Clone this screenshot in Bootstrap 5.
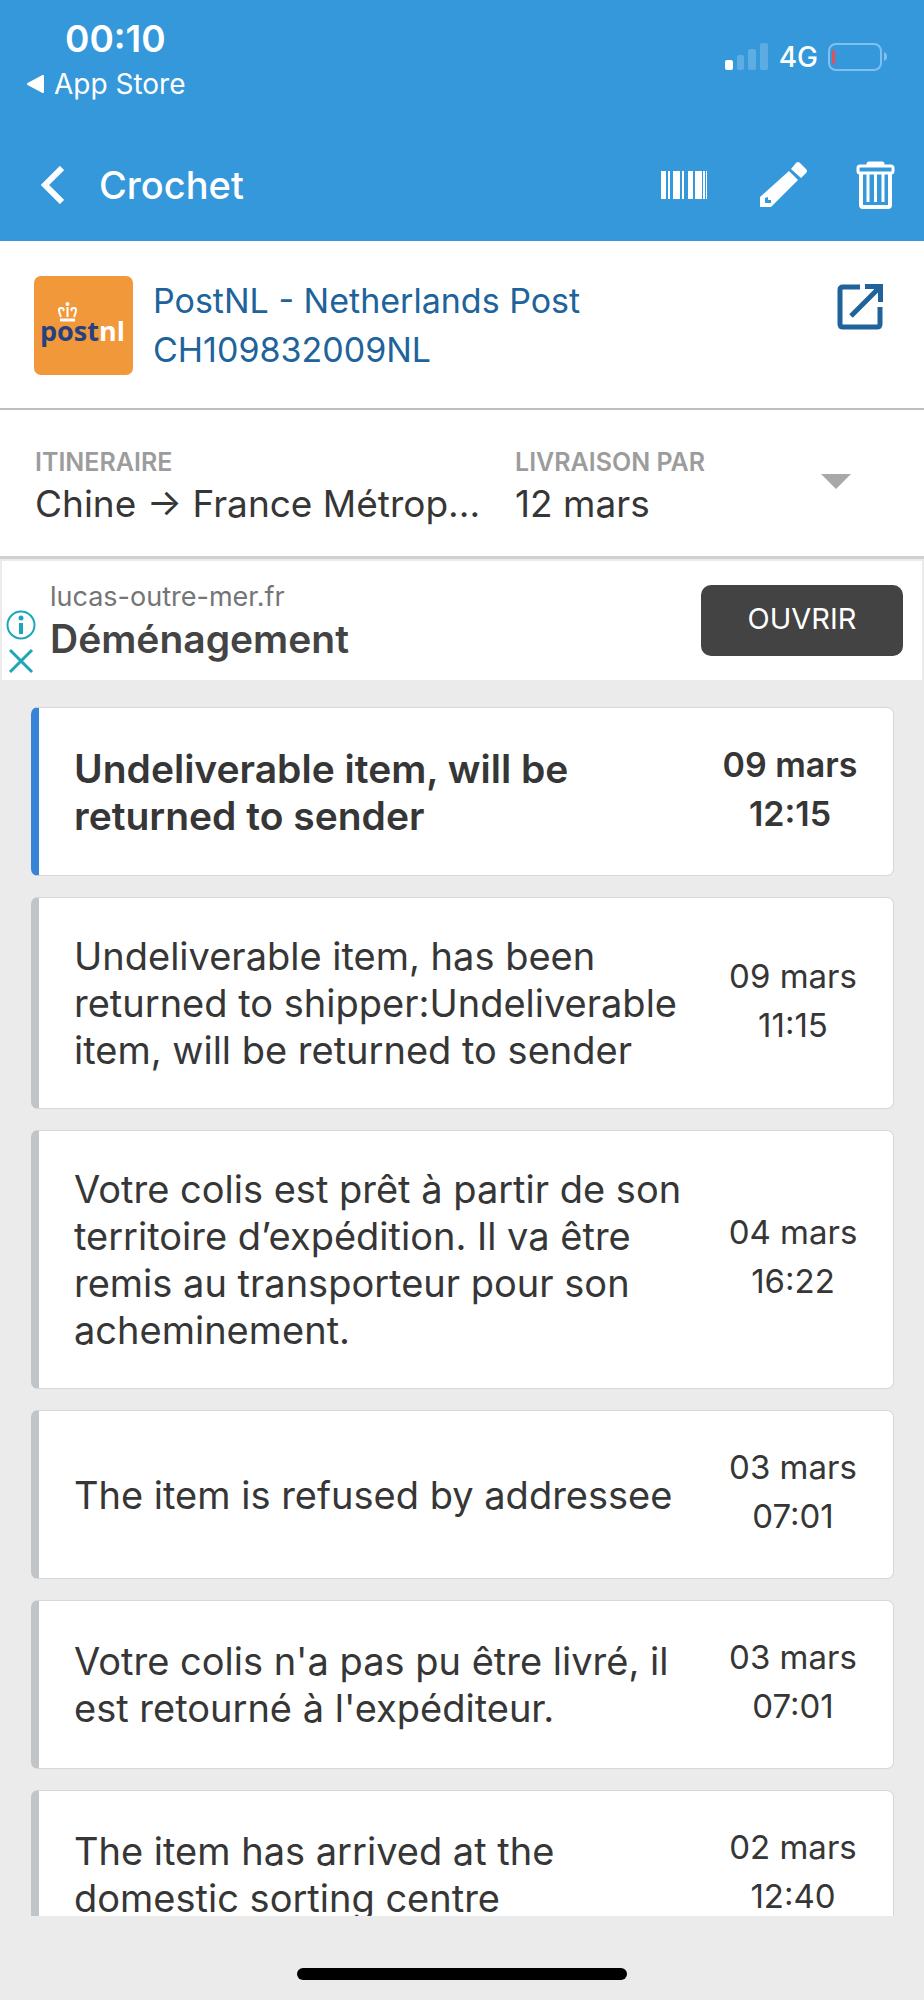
<!DOCTYPE html>
<html lang="fr">
<head>
<meta charset="utf-8">
<meta name="viewport" content="width=device-width, initial-scale=1">
<title>Crochet</title>
<link rel="stylesheet" href="https://cdn.jsdelivr.net/npm/bootstrap@5.3.0/dist/css/bootstrap.min.css">
<style>
  body { font-family: Inter, "Liberation Sans", sans-serif; background: #ebebeb; color: #363636; font-size: 37px; line-height: 47px; }
  svg { display: block; flex: none; }
  .app-head { background: #3498db; color: #fff; }
  .status-row { height: 112px; padding: 15px 36px 0 27px; }
  .clock { font-weight: 600; line-height: 48px; padding-left: 38px; }
  .back-app { font-size: 28px; line-height: 42px; color: #fff; gap: 10px; }
  .net { font-size: 28px; font-weight: 500; line-height: 36px; padding: 0 10px 0 11px; }
  .bar-row { height: 129px; padding: 16px 29px 0 41px; }
  .bar-title { font-size: 38px; font-weight: 500; line-height: 48px; padding-left: 35px; }
  .plain { border: 0; background: none; padding: 0; color: inherit; }
  .carrier { padding: 35px 41px 33px 34px; border-bottom: 2px solid #bdbdbd; }
  .carrier a { color: #20639b; font-size: 34px; line-height: 49px; }
  .summary { padding: 34px 73px 29px 35px; border-bottom: 3px solid #d0d0d0; }
  .summary button { padding-bottom: 8px; }
  .caption-sm { font-size: 25px; line-height: 36px; font-weight: 600; color: #9c9c9c; }
  .route-cell { flex: 0 1 480px; padding-right: 20px; }
  .ad { margin: 2px 2px 0; padding: 0 19px 0 4px; height: 119px; color: #444; }
  .ad-host { font-size: 27px; line-height: 36px; color: #757575; }
  .ad-title { font-weight: 600; font-size: 39px; line-height: 48px; }
  .ad-text { margin-left: 14px; }
  .ad-icons { gap: 8px; padding-bottom: 6px; }
  .ad-btn, .ad-btn:hover { width: 202px; height: 71px; border-radius: 10px; background: #434343; color: #fff; font-size: 29px; font-weight: 400; padding: 0 0 4px; }
  .feed { flex: 1 1 0; min-height: 0; overflow-y: auto; scrollbar-width: none; padding: 27px 30px 0 31px; gap: 21px; }
  .feed::-webkit-scrollbar { display: none; }
  .event { flex: none; min-height: 169px; border: 1px solid #d5d7d8; border-left: 8px solid #c1c5c7; border-radius: 7px; padding: 35px 34px 34px 35px; font-size: 38px; }
  .event time { flex: none; width: 132px; font-size: 33px; line-height: 49px; margin: -4px 0 2px; }
  .event.latest { border-left-color: #3683d8; font-weight: 600; }
  .event.latest > div { font-size: 39px; }
  .event.latest time { width: 138px; font-size: 34px; }
  .home-zone { height: 84px; padding-bottom: 20px; }
  .home-bar { width: 330px; height: 12px; border-radius: 6px; background: #000; }
</style>
<script src="https://cdn.jsdelivr.net/npm/bootstrap@5.3.0/dist/js/bootstrap.bundle.min.js"></script>
</head>
<body class="vh-100 d-flex flex-column overflow-hidden">
<header class="app-head">
  <div class="status-row d-flex justify-content-between">
    <div>
      <div class="clock">00:10</div>
      <a href="#" class="back-app d-flex align-items-center text-decoration-none">
        <svg width="17" height="18" viewBox="0 0 17 18"><path d="M1 9 16 1v16z" fill="#fff" stroke="#fff" stroke-width="2" stroke-linejoin="round"/></svg>
        App Store
      </a>
    </div>
    <div class="d-flex align-items-center align-self-start pt-4">
      <svg width="43" height="28" viewBox="0 0 43 28" fill="#fff"><rect y="17" width="8" height="10" rx="2"/><g opacity=".2"><rect x="12" y="12" width="7" height="15" rx="2"/><rect x="23" y="6" width="8" height="21" rx="2"/><rect x="35" width="8" height="27" rx="2"/></g></svg>
      <span class="net">4G</span>
      <svg width="60" height="28" viewBox="0 0 60 28"><rect x="1" y="1" width="52" height="26" rx="7" fill="none" stroke="#80c0ee" stroke-width="2"/><path d="M56 9v9q3-1 3-4.500t-3-4.500" fill="#80c0ee"/><path d="M7 6v16q-3-1-3-4v-8q0-3 3-4" fill="#e2505a"/></svg>
    </div>
  </div>
  <nav class="bar-row d-flex align-items-center" aria-label="Colis">
    <button class="plain" type="button" aria-label="Retour"><svg width="23" height="38" viewBox="0 0 23 38"><path d="M21 2 4 19l17 17" fill="none" stroke="#fff" stroke-width="6"/></svg></button>
    <h1 class="bar-title m-0 me-auto">Crochet</h1>
    <button class="plain" type="button" aria-label="Code-barres"><svg width="47" height="28" viewBox="0 0 47 28" fill="#fff"><path d="M0 0h5v28H0zM7 0h2v28H7zM12 0h7v28h-7zM21 0h2v28h-2zM27 0h5v28h-5zM34 0h7v28h-7zM42 0h2v28h-2zM45 0h1v28h-1z"/></svg></button>
    <button class="plain ms-5" type="button" aria-label="Modifier"><svg class="ms-1" width="48" height="47" viewBox="0 0 48 47"><path d="M29 10 38 19 11 46H0V36z" fill="#fff"/><path d="M31 8 36 2q2-2 4 0l6 6q2 2 0 4l-5 5z" fill="#fff"/><path d="M5 37v5h6v-3H8v-3z" fill="#3498db"/></svg></button>
    <button class="plain ms-5" type="button" aria-label="Supprimer"><svg width="39" height="48" viewBox="0 0 39 48" fill="none" stroke="#fff"><path d="M13 3h13" stroke-width="5" stroke-linecap="round"/><rect x="2" y="5" width="35" height="7" rx="2" stroke-width="3"/><path d="M5 12v32q0 2 2 2h25q2 0 2-2V12" stroke-width="4"/><path d="M12 13v28M19.500 13v28M27 13v28" stroke-width="3"/></svg></button>
  </nav>
</header>

<section class="carrier bg-white d-flex">
  <svg width="99" height="99" viewBox="0 0 99 99" role="img" aria-label="PostNL">
    <rect width="99" height="99" rx="7" fill="#f0983a"/>
    <g fill="none" stroke="#fff" stroke-width="2"><path d="M27 41q-4-9 0-9 4 0 2 3M40 41q4-9 0-9-4 0-2 3M33.500 41V31"/><path d="M26 44h15" stroke-width="3"/></g><circle cx="33.500" cy="28" r="2" fill="#fff"/>
    <text x="6" y="65" font-family="Open Sans, sans-serif" font-weight="700" font-size="27" fill="#27407f">post<tspan fill="#fff">nl</tspan></text>
  </svg>
  <div class="ms-3 ps-1 me-auto">
    <a href="#" class="d-block text-decoration-none">PostNL - Netherlands Post</a>
    <a href="#" class="d-block text-decoration-none">CH109832009NL</a>
  </div>
  <a href="#" class="pt-2" aria-label="Ouvrir le site"><svg width="46" height="46" viewBox="0 0 46 46" fill="none" stroke="#20639b" stroke-width="5"><path d="M23 3H6Q3 3 3 6v34q0 3 3 3h34q3 0 3-3V23M14 32 41 5"/><path d="M28 0h18v18h-5V9L37 5h-9z" fill="#20639b" stroke="none"/></svg></a>
</section>

<section class="summary bg-white d-flex align-items-center">
  <div class="route-cell">
    <div class="caption-sm">ITINERAIRE</div>
    <div class="text-truncate">Chine → France Métrop...</div>
  </div>
  <div class="me-auto">
    <div class="caption-sm">LIVRAISON PAR</div>
    <div>12 mars</div>
  </div>
  <button class="plain" type="button" aria-label="Afficher les détails"><svg width="30" height="15" viewBox="0 0 30 15"><path d="M0 0h30L15 15z" fill="#a8a8a8"/></svg></button>
</section>

<aside class="ad bg-white d-flex align-items-center">
  <div class="ad-icons d-flex flex-column align-items-center align-self-end">
    <a href="#" aria-label="À propos de cette annonce"><svg width="30" height="30" viewBox="0 0 30 30"><circle cx="15" cy="15" r="13.500" fill="none" stroke="#1ba6ba" stroke-width="2"/><circle cx="15" cy="8" r="2.500" fill="#1ba6ba"/><path d="M13 13h4v11h-4z" fill="#1ba6ba"/></svg></a>
    <button class="plain" type="button" aria-label="Fermer"><svg width="30" height="26" viewBox="0 0 30 26"><path d="M4 2l22 22M26 2 4 24" stroke="#1ba6ba" stroke-width="3"/></svg></button>
  </div>
  <div class="ad-text me-auto">
    <div class="ad-host">lucas-outre-mer.fr</div>
    <div class="ad-title">Déménagement</div>
  </div>
  <button class="btn ad-btn" type="button">OUVRIR</button>
</aside>

<main class="feed d-flex flex-column">
  <article class="event latest bg-white d-flex align-items-center justify-content-between gap-3"><div>Undeliverable item, will be<br>returned to sender</div><time class="text-center">09 mars<br>12:15</time></article>
  <article class="event bg-white d-flex align-items-center justify-content-between gap-3"><div>Undeliverable item, has been<br>returned to shipper:Undeliverable<br>item, will be returned to sender</div><time class="text-center">09 mars<br>11:15</time></article>
  <article class="event bg-white d-flex align-items-center justify-content-between gap-3"><div>Votre colis est prêt à partir de son<br>territoire d’expédition. Il va être<br>remis au transporteur pour son<br>acheminement.</div><time class="text-center">04 mars<br>16:22</time></article>
  <article class="event bg-white d-flex align-items-center justify-content-between gap-3"><div>The item is refused by addressee</div><time class="text-center">03 mars<br>07:01</time></article>
  <article class="event bg-white d-flex align-items-center justify-content-between gap-3"><div>Votre colis n'a pas pu être livré, il<br>est retourné à l'expéditeur.</div><time class="text-center">03 mars<br>07:01</time></article>
  <article class="event bg-white d-flex align-items-center justify-content-between gap-3"><div>The item has arrived at the<br>domestic sorting centre</div><time class="text-center">02 mars<br>12:40</time></article>
</main>
<footer class="home-zone d-flex align-items-end justify-content-center"><div class="home-bar"></div></footer>
</body>
</html>
